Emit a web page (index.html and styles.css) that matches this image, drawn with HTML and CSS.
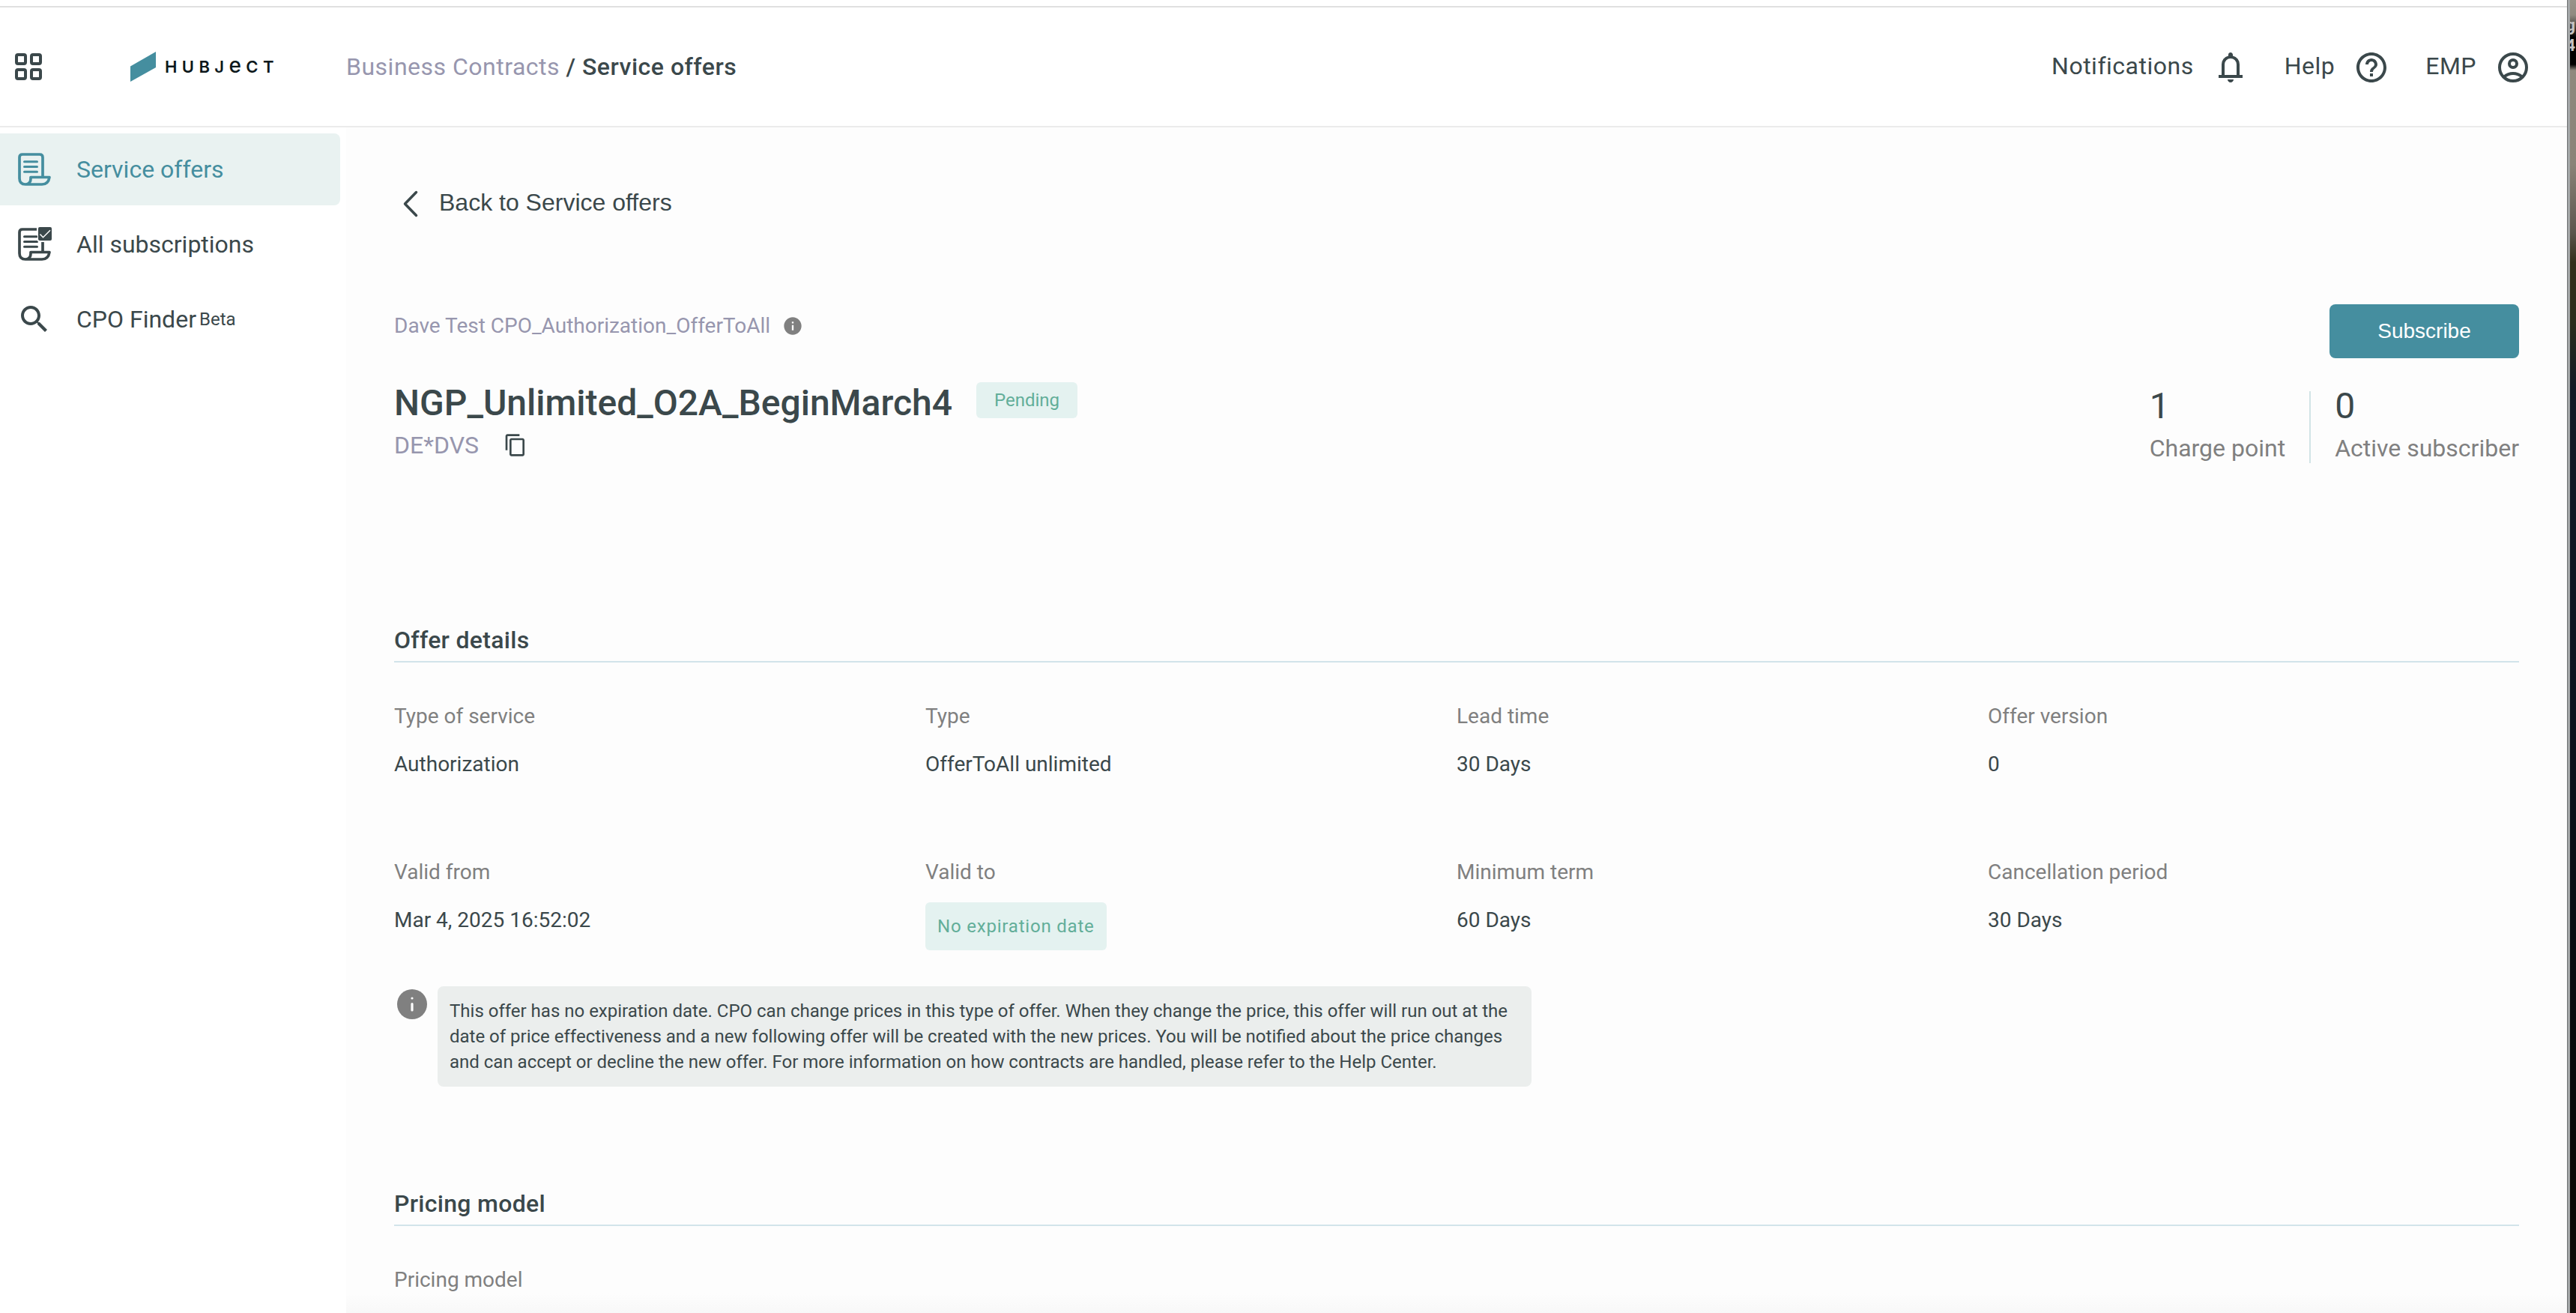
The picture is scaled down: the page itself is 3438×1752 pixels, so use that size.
FILE: index.html
```html
<!DOCTYPE html>
<html lang="en">
<head>
  <meta charset="UTF-8">
  <meta name="viewport" content="width=device-width, initial-scale=1.0">
  <title>Service offers</title>
  <link rel="stylesheet" href="styles.css">
</head>
<body>

<div class="window">

  <header class="topbar">
    <svg class="grid-icon" width="36" height="36" viewBox="0 0 36 36" fill="none" stroke="currentColor" stroke-width="4">
      <rect x="2" y="2" width="12" height="12" rx="2"/>
      <rect x="22" y="2" width="12" height="12" rx="2"/>
      <rect x="2" y="22" width="12" height="12" rx="2"/>
      <rect x="22" y="22" width="12" height="12" rx="2"/>
    </svg>
    <div class="logo">
      <svg width="34" height="40" viewBox="0 0 34 40"><path d="M0 19.5L34 0v21L0 40z" fill="#458e9f"/></svg>
      <span class="logo-text">HUBJ<span class="logo-e">e</span>CT</span>
    </div>
    <nav class="breadcrumb">
      <span class="crumb">Business Contracts</span> <b>/ Service offers</b>
    </nav>
    <div class="actions">
      <span class="action-notifications">Notifications</span>
      <svg class="icon" width="48" height="48" viewBox="0 0 24 24"><path fill="currentColor" d="M4 19v-2h2v-7q0-2.075 1.25-3.688Q8.500 4.700 10.500 4.200v-.7q0-.625.438-1.063Q11.375 2 12 2t1.063.438q.437.437.437 1.062v.7q2 .5 3.250 2.112Q18 7.925 18 10v7h2v2Zm8 3q-.825 0-1.413-.587Q10 20.825 10 20h4q0 .825-.587 1.413Q12.825 22 12 22Zm-4-5h8v-7q0-1.650-1.175-2.825Q13.650 6 12 6q-1.650 0-2.825 1.175Q8 8.350 8 10Z"/></svg>
      <span class="action-help">Help</span>
      <svg class="icon" width="48" height="48" viewBox="0 0 24 24"><path fill="currentColor" d="M11 18h2v-2h-2v2zm1-16C6.480 2 2 6.480 2 12s4.480 10 10 10 10-4.480 10-10S17.520 2 12 2zm0 18c-4.410 0-8-3.590-8-8s3.590-8 8-8 8 3.590 8 8-3.590 8-8 8zm0-14c-2.210 0-4 1.790-4 4h2c0-1.100.9-2 2-2s2 .9 2 2c0 2-3 1.750-3 5h2c0-2.250 3-2.500 3-5 0-2.210-1.790-4-4-4z"/></svg>
      <span class="action-user">EMP</span>
      <svg class="icon" width="48" height="48" viewBox="0 0 24 24" fill="none" stroke="currentColor" stroke-width="2">
        <circle cx="12" cy="12" r="9"/>
        <circle cx="12" cy="9.500" r="2.500"/>
        <path d="M6 18.300q2.700-2.300 6-2.300t6 2.300"/>
      </svg>
    </div>
  </header>

  <div class="layout">
    <aside class="sidebar">
      <a class="nav-item active">
        <svg class="nav-icon" width="48" height="48" viewBox="0 0 48 48" fill="none" stroke="currentColor" stroke-width="3.700">
          <path d="M35 33V8q0-4-4-4H8Q4 4 4 8v28q0 8 8 8h22q8.500 0 10-9.500H19v2q0 7-7 7.500" stroke-linejoin="round"/>
          <path d="M10.500 13.700h17M10.500 20.500h17M10.500 27.300h17" stroke-width="3" stroke-linecap="round"/>
        </svg>
        Service offers
      </a>
      <a class="nav-item">
        <svg class="nav-icon" width="48" height="48" viewBox="0 0 48 48" fill="none" stroke="currentColor" stroke-width="3.700">
          <path d="M27 4H8Q4 4 4 8v28q0 8 8 8h22q8.500 0 10-9.500H19v2q0 7-7 7.500M35 21v12" stroke-linejoin="round"/>
          <path d="M10.500 13.700H27M10.500 20.500h17M10.500 27.300h17" stroke-width="3" stroke-linecap="round"/>
          <rect x="28" y="0" width="20" height="20" fill="#fff" stroke="none"/>
          <rect x="29" y="1" width="18" height="18" rx="2" fill="currentColor" stroke="none"/>
          <path d="M31.500 10.500l4 4.200 9.500-9.400" stroke="#fff" stroke-width="1.500"/>
        </svg>
        All subscriptions
      </a>
      <a class="nav-item">
        <svg class="nav-icon" width="48" height="48" viewBox="0 0 24 24"><path fill="currentColor" d="M15.500 14h-.79l-.28-.27C15.410 12.590 16 11.110 16 9.500 16 5.910 13.090 3 9.500 3S3 5.910 3 9.500 5.910 16 9.500 16c1.610 0 3.090-.59 4.230-1.570l.27.28v.79l5 4.990L20.490 19l-4.990-5zm-6 0C7.010 14 5 11.990 5 9.500S7.010 5 9.500 5 14 7.010 14 9.500 11.990 14 9.500 14z"/></svg>
        CPO Finder<small class="beta">Beta</small>
      </a>
    </aside>

    <main class="content">
      <a class="back">
        <svg width="20" height="36" viewBox="0 0 20 36" fill="none" stroke="currentColor" stroke-width="3.500" stroke-linecap="round" stroke-linejoin="round"><path d="M17.500 2.500L2.500 18l15 15.500"/></svg>
        Back to Service offers
      </a>

      <div class="offer-head">
        <div class="offer-info">
          <div class="provider">
            Dave Test CPO_Authorization_OfferToAll
            <svg class="info-small" width="28" height="28" viewBox="0 0 24 24"><path d="M12 2C6.480 2 2 6.480 2 12s4.480 10 10 10 10-4.480 10-10S17.520 2 12 2zm1 15h-2v-6h2v6zm0-8h-2V7h2v2z"/></svg>
          </div>
          <div class="title-row">
            <h1>NGP_Unlimited_O2A_BeginMarch4</h1>
            <span class="badge">Pending</span>
          </div>
          <div class="offer-id">
            DE*DVS
            <svg width="32" height="32" viewBox="0 0 24 24"><path fill="currentColor" d="M16 1H4c-1.100 0-2 .9-2 2v14h2V3h12V1zm3 4H8c-1.100 0-2 .9-2 2v14c0 1.100.9 2 2 2h11c1.100 0 2-.9 2-2V7c0-1.100-.9-2-2-2zm0 16H8V7h11v14z"/></svg>
          </div>
        </div>
        <div class="offer-side">
          <button class="subscribe">Subscribe</button>
          <div class="stats">
            <div class="stat">
              <div class="stat-value">1</div>
              <div class="stat-label">Charge point</div>
            </div>
            <div class="stat">
              <div class="stat-value">0</div>
              <div class="stat-label">Active subscriber</div>
            </div>
          </div>
        </div>
      </div>

      <!-- Offer details -->
      <section class="details">
        <h2>Offer details</h2>
        <div class="fields">
          <div class="field"><label>Type of service</label><p>Authorization</p></div>
          <div class="field"><label>Type</label><p>OfferToAll unlimited</p></div>
          <div class="field"><label>Lead time</label><p>30 Days</p></div>
          <div class="field"><label>Offer version</label><p>0</p></div>
          <div class="field"><label>Valid from</label><p>Mar 4, 2025 16:52:02</p></div>
          <div class="field"><label>Valid to</label><span class="badge badge-large">No expiration date</span></div>
          <div class="field"><label>Minimum term</label><p>60 Days</p></div>
          <div class="field"><label>Cancellation period</label><p>30 Days</p></div>
        </div>
        <div class="notice">
          <svg class="info-large" width="48" height="48" viewBox="0 0 24 24"><circle cx="12" cy="12" r="10"/><path d="M12 11.800v4.200M12 8v.01" stroke="#fdfdfd" stroke-width="1.600" stroke-linecap="round"/></svg>
          <p class="notice-text">This offer has no expiration date. CPO can change prices in this type of offer. When they change the price, this offer will run out at the date of price effectiveness and a new following offer will be created with the new prices. You will be notified about the price changes and can accept or decline the new offer. For more information on how contracts are handled, please refer to the Help Center.</p>
        </div>
      </section>

      <!-- Pricing model -->
      <section>
        <h2>Pricing model</h2>
        <div class="fields">
          <div class="field"><label>Pricing model</label></div>
        </div>
      </section>
    </main>
  </div>

</div>

<div class="desktop">
  <span class="desktop-label">g</span>
  <span class="desktop-label">4</span>
</div>

</body>
</html>
```
FILE: styles.css
```css
* {
  box-sizing: border-box;
}

body {
  font-family: Roboto, sans-serif;
  font-size: 32px;
  color: #3b484b;
  margin: 0;
  height: 1752px;
  display: flex;
  overflow: hidden;
  background: #ffffff;
}

svg {
  display: block;
  flex-shrink: 0;
}

h1, h2, p {
  margin: 0;
}

.window {
  width: 3426px;
  height: 1752px;
  padding-top: 8px;
  overflow: hidden;
}

/* Strip of desktop behind the window */
.desktop {
  width: 12px;
  height: 1752px;
  padding-top: 22px;
  overflow: hidden;
  border-left: 1px solid #6f7273;
  background:
    linear-gradient(90deg, #a5a8a9 3px, transparent 3px),
    linear-gradient(#989389 0, #8f8a80 20px, #000000 50px, #000000 86px, #8f897e 94px, #8a8378 220px, #5c564d 310px, #33301c 350px, #2b2c1c 430px, #121a26 520px, #0d1420 900px, #080c10 1300px, #0a0805 1600px, #120c08 1752px);
}

.desktop-label {
  display: block;
  width: 7px;
  height: 27px;
  margin-left: 3px;
  overflow: hidden;
  direction: rtl;
  font-size: 22px;
  font-weight: 700;
  line-height: 24px;
  color: #c4c4c4;
}

.topbar {
  display: flex;
  align-items: center;
  height: 162px;
  padding: 0 48px 0 20px;
  border-top: 2px solid #e0e0e0;
  border-bottom: 2px solid #ebebeb;
}

.logo {
  display: flex;
  align-items: center;
  gap: 12px;
  width: 288px;
  margin-left: 118px;
}

.logo-text {
  font-family: Inter, sans-serif;
  font-size: 22px;
  font-weight: 600;
  line-height: 40px;
  letter-spacing: 6.4px;
  color: #0d181b;
}

.logo-e {
  font-size: 28px;
  font-weight: 500;
  line-height: 1;
}

.breadcrumb {
  letter-spacing: 0.5px;
}

.breadcrumb b {
  font-weight: 500;
}

.crumb {
  color: #9796ae;
}

.actions {
  display: flex;
  align-items: center;
  margin-left: auto;
  letter-spacing: 0.5px;
}

.actions span {
  margin-bottom: 2px;
}

.actions .icon {
  margin-top: 2px;
}

.action-notifications {
  margin-right: 25px;
}

.action-help {
  margin-left: 48px;
  margin-right: 25px;
}

.action-user {
  margin-left: 48px;
  margin-right: 25px;
}

.layout {
  display: flex;
  height: 1582px;
}

.sidebar {
  width: 462px;
  padding: 8px 8px 0 0;
  display: flex;
  flex-direction: column;
  gap: 4px;
}

.nav-item {
  display: flex;
  align-items: center;
  height: 96px;
  padding-left: 22px;
  border-radius: 0 8px 8px 0;
}

.nav-item.active {
  background: #e9f2f1;
  color: #458e9f;
}

.nav-icon {
  margin-right: 32px;
}

.beta {
  font-size: 24px;
  margin-left: 4px;
}

.content {
  flex: 1;
  padding: 76px 64px 0;
  background: linear-gradient(#fdfdfd 1556px, #f8f8f8);
}

.back {
  display: flex;
  align-items: center;
  gap: 28px;
  height: 48px;
  margin-left: 12px;
  font-family: "Liberation Sans", Arial, sans-serif;
}

.back svg {
  margin-top: 3px;
}

.offer-head {
  display: flex;
  justify-content: space-between;
  margin-top: 112px;
}

.provider {
  display: flex;
  align-items: center;
  gap: 16px;
  height: 56px;
  font-size: 28px;
  color: #9796ae;
}

.info-small {
  margin-top: 2px;
}

.info-small,
.info-large {
  fill: #808080;
}

.title-row {
  display: flex;
  gap: 32px;
  height: 56px;
  margin-top: 48px;
}

h1 {
  font-size: 48px;
  font-weight: 500;
  line-height: 56px;
}

.badge {
  height: 48px;
  padding: 0 24px;
  border-radius: 6px;
  font-size: 24px;
  line-height: 48px;
  background: #e4f2f0;
  color: #62ae99;
}

.badge-large {
  display: inline-block;
  height: 64px;
  padding: 0 16px;
  margin-top: 20px;
  line-height: 64px;
  letter-spacing: 0.8px;
}

.offer-id {
  display: flex;
  align-items: center;
  gap: 33px;
  height: 48px;
  margin-top: 4px;
  color: #9796ae;
}

.offer-id svg {
  color: #3b484b;
}

.offer-side {
  display: flex;
  flex-direction: column;
  align-items: flex-end;
}

.subscribe {
  width: 253px;
  height: 72px;
  border: none;
  border-radius: 8px;
  font-family: "Liberation Sans", Arial, sans-serif;
  font-size: 28px;
  background: #458e9f;
  color: #ffffff;
}

.stats {
  display: flex;
  margin-top: 44px;
}

.stat + .stat {
  margin-left: 32px;
  padding-left: 32px;
  border-left: 2px solid #d2e4e6;
}

.stat-value {
  font-size: 48px;
  line-height: 40px;
}

.stat-label {
  margin-top: 16px;
  line-height: 40px;
  color: #808080;
}

.details {
  height: 752px;
  margin-top: 216px;
}

h2 {
  font-size: 32px;
  font-weight: 500;
  line-height: 40px;
  letter-spacing: 0.3px;
  padding-bottom: 8px;
  border-bottom: 2px solid #d2e4ea;
}

.fields {
  display: grid;
  grid-template-columns: repeat(4, 1fr);
  margin-top: 52px;
}

.field {
  height: 208px;
  font-size: 28px;
  line-height: 40px;
}

.field label {
  display: block;
  color: #808080;
}

.field p {
  margin-top: 24px;
}

.notice {
  display: flex;
  gap: 10px;
  margin-top: -36px;
}

.notice-text {
  width: 1460px;
  height: 134px;
  padding: 16px 24px 16px 16px;
  border-radius: 8px;
  font-size: 24px;
  line-height: 34px;
  background: #ebeeed;
}
```
